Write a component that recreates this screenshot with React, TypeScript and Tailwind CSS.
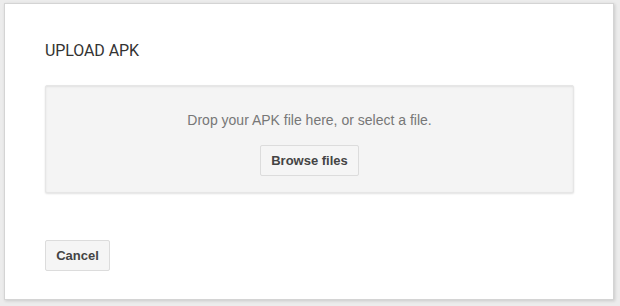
import React from 'react';

const App: React.FC = () => {
  return (
    <div className="w-[620px] h-[306px] bg-[#ececec] pt-[3px] pl-[4px] pr-[6px] pb-[6px] font-['Liberation_Sans',Arial,sans-serif]">
      <div className="h-[297px] bg-white border border-[#d4d4d4] shadow-[1px_1px_3px_rgba(0,0,0,0.15)] px-[40px] pt-[37px]">
        <h2 className="font-['Roboto',sans-serif] text-[16px] leading-[19px] text-[#333] tracking-[-0.1px]">UPLOAD APK</h2>
        <div className="mt-[25px] h-[108px] w-[529px] bg-[#f4f4f4] border border-[#e6e6e6] rounded-[2px] shadow-[inset_0_1px_2px_rgba(0,0,0,0.08),0_1px_2px_rgba(0,0,0,0.12)] flex flex-col items-center pt-[25px]">
          <p className="text-[14px] leading-[18px] text-[#777]">Drop your APK file here, or select a file.</p>
          <button className="mt-[16px] h-[31px] px-[10px] bg-[#f5f5f5] border border-[#dcdcdc] rounded-[2px] text-[13px] font-bold text-[#444]">
            Browse files
          </button>
        </div>
        <button className="mt-[47px] h-[31px] w-[65px] bg-[#f5f5f5] border border-[#dcdcdc] rounded-[2px] text-[13px] font-bold text-[#444]">
          Cancel
        </button>
      </div>
    </div>
  );
};

export default App;
